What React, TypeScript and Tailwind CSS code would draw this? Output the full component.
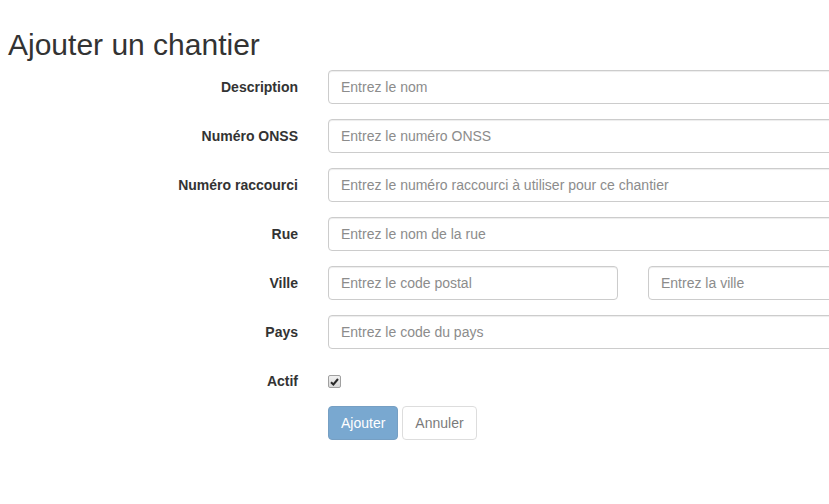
import React from "react";

const fields = [
  { label: "Description", placeholder: "Entrez le nom" },
  { label: "Numéro ONSS", placeholder: "Entrez le numéro ONSS" },
  { label: "Numéro raccourci", placeholder: "Entrez le numéro raccourci à utiliser pour ce chantier" },
  { label: "Rue", placeholder: "Entrez le nom de la rue" },
];

const inputClass =
  "block h-[34px] w-full rounded-[4px] border border-[#ccc] bg-white px-3 py-[6px] text-[14px] leading-5 text-[#555] shadow-[inset_0_1px_1px_rgba(0,0,0,0.075)] outline-none placeholder:text-[#8c8c8c]";

function Row({ label, children }: { label: string; children: React.ReactNode }) {
  return (
    <div className="mb-[15px] flex gap-[30px]">
      <label className="w-[298px] shrink-0 pt-[7px] text-right text-[14px] font-bold leading-5 text-[#333]">
        {label}
      </label>
      <div className="flex-1">{children}</div>
    </div>
  );
}

export default function App() {
  return (
    <div className="w-full overflow-hidden bg-white font-['Liberation_Sans',Arial,sans-serif] text-[#333]">
      <div className="w-[1000px] pb-[60px]">
        <h2 className="mt-[28px] mb-[9px] pl-[8px] text-[30px] font-normal leading-[33px] text-[#333]">
          Ajouter un chantier
        </h2>
        <form>
          {fields.map((f) => (
            <Row key={f.label} label={f.label}>
              <input className={inputClass} placeholder={f.placeholder} />
            </Row>
          ))}
          <Row label="Ville">
            <div className="flex gap-[30px]">
              <input className={inputClass + " !w-[290px] shrink-0"} placeholder="Entrez le code postal" />
              <input className={inputClass} placeholder="Entrez la ville" />
            </div>
          </Row>
          <Row label="Pays">
            <input className={inputClass} placeholder="Entrez le code du pays" />
          </Row>
          <div className="mb-[15px] flex h-[27px] gap-[30px]">
            <label className="w-[298px] shrink-0 pt-[7px] text-right text-[14px] font-bold leading-5 text-[#333]">
              Actif
            </label>
            <div className="flex-1 pt-[11px]">
              <span className="flex h-[13px] w-[13px] items-center justify-center rounded-[2px] border border-[#a0a0a0] bg-gradient-to-b from-[#f0f0f0] to-[#d8d8d8]">
                <svg width="9" height="8" viewBox="0 0 9 8">
                  <path d="M1 4.2 L3.4 6.5 L8 1" fill="none" stroke="#2a2a2a" strokeWidth="2" />
                </svg>
              </span>
            </div>
          </div>
          <div className="flex gap-[4px] pl-[328px]">
            <button
              type="button"
              disabled
              className="h-[34px] rounded-[4px] border border-[#2e6da4] bg-[#337ab7] px-3 text-[14px] leading-5 text-white opacity-65"
            >
              Ajouter
            </button>
            <button
              type="button"
              className="h-[34px] rounded-[4px] border border-[#ccc] bg-white px-3 text-[14px] leading-5 text-[#333] opacity-65"
            >
              Annuler
            </button>
          </div>
        </form>
      </div>
    </div>
  );
}
